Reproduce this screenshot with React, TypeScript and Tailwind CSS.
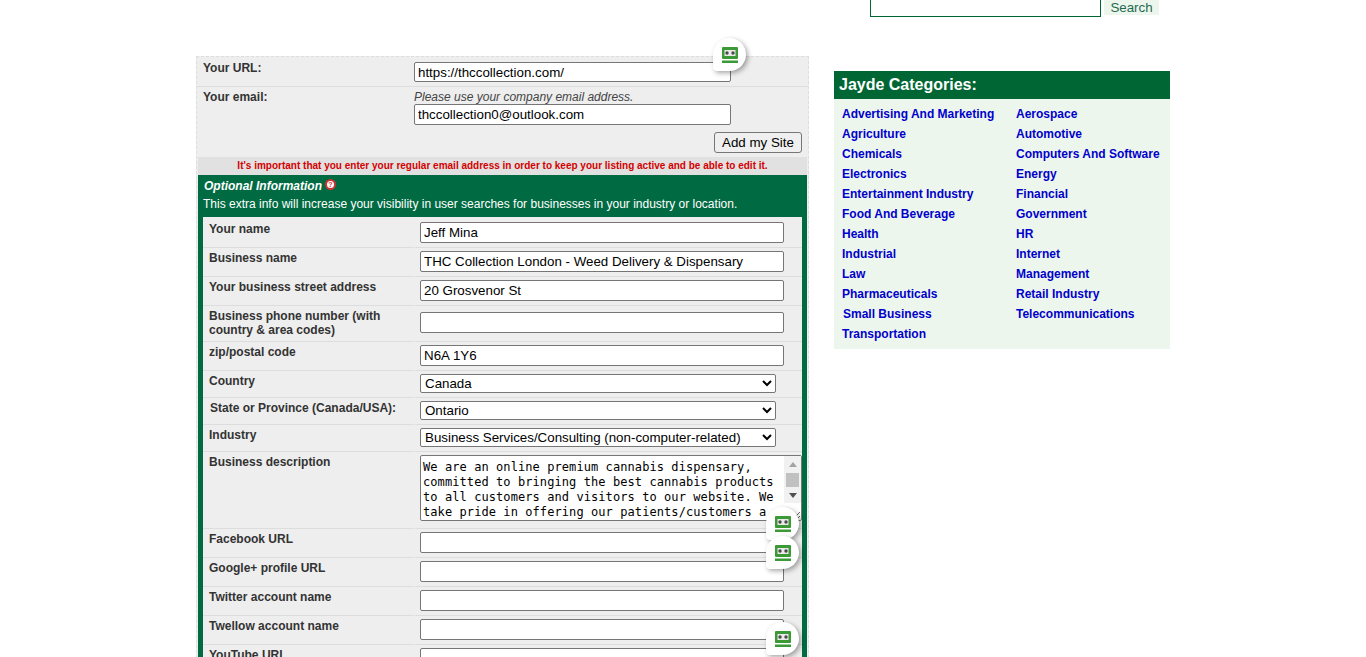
const inputCls =
  "block rounded-[2px] border border-[#767676] bg-white px-[3px] text-[13.33px] leading-[18px] text-black";
const selectCls =
  "block h-[19px] w-[356px] rounded-[2px] border border-[#767676] bg-white text-[13.33px] leading-[17px] text-black";

const categories = [
  ["Advertising And Marketing", "Aerospace"],
  ["Agriculture", "Automotive"],
  ["Chemicals", "Computers And Software"],
  ["Electronics", "Energy"],
  ["Entertainment Industry", "Financial"],
  ["Food And Beverage", "Government"],
  ["Health", "HR"],
  ["Industrial", "Internet"],
  ["Law", "Management"],
  ["Pharmaceuticals", "Retail Industry"],
  ["Small Business", "Telecommunications"],
  ["Transportation", ""],
];

function RoboBadge({ className }: { className: string }) {
  return (
    <div
      className={`absolute flex h-[33px] w-[33px] items-center justify-center rounded-[50%_50%_50%_4px] bg-white shadow-[2px_2px_5px_rgba(0,0,0,0.35)] ${className}`}
    >
      <svg width="16" height="16" viewBox="0 0 16 16">
        <rect x="0" y="0" width="16" height="12" rx="1" fill="#3b9a35" />
        <rect x="2.5" y="3" width="11" height="6" fill="#e9e9e9" />
        <circle cx="5" cy="6" r="1.7" fill="#4a4a4a" />
        <circle cx="11" cy="6" r="1.7" fill="#4a4a4a" />
        <rect x="0" y="13.5" width="16" height="2.5" fill="#3b9a35" />
      </svg>
    </div>
  );
}

function Row({
  label,
  h,
  children,
  labelCls = "pl-[6px]",
  pt = "pt-[3px]",
}: {
  label: string;
  h: string;
  children: React.ReactNode;
  labelCls?: string;
  pt?: string;
}) {
  return (
    <div className={`flex gap-[1px] ${h}`}>
      <div
        className={`w-[211px] shrink-0 border-b border-[#dddddd] ${pt} text-[12px] leading-[14px] font-bold text-[#333333] ${labelCls}`}
      >
        {label}
      </div>
      <div className={`flex-1 border-b border-[#dddddd] ${pt} pl-[5px]`}>
        {children}
      </div>
    </div>
  );
}

function TextRow({ label, value = "", h = "h-[29px]", pt }: { label: string; value?: string; h?: string; pt?: string }) {
  return (
    <Row label={label} h={h} pt={pt}>
      <input className={`${inputCls} h-[21px] w-[364px]`} defaultValue={value} />
    </Row>
  );
}

function SelectRow({ label, value, labelCls }: { label: string; value: string; labelCls?: string }) {
  return (
    <Row label={label} h="h-[27px]" labelCls={labelCls}>
      <select className={selectCls} defaultValue={value}>
        <option>{value}</option>
      </select>
    </Row>
  );
}

function DescriptionField() {
  return (
    <div className="relative w-[382px]">
      <textarea
        className="block h-[66px] w-[382px] resize overflow-hidden rounded-[2px] border border-[#767676] bg-white pt-[4px] pr-[18px] pl-[2px] font-['DejaVu_Sans_Mono',monospace] text-[12px] leading-[15px] tracking-[0.08px] text-black"
        defaultValue="We are an online premium cannabis dispensary, committed to bringing the best cannabis products to all customers and visitors to our website. We take pride in offering our patients/customers a wide range of high quality products and the best service in the whole of the country."
      />
      {/* native scrollbar does not paint in the headless page */}
      <div className="absolute top-[1px] right-[1px] flex h-[47px] w-[17px] flex-col items-center bg-[#f1f1f1]">
        <div className="mt-[6px] h-0 w-0 border-x-[4px] border-b-[5px] border-x-transparent border-b-[#a3a3a3]" />
        <div className="mt-[6px] h-[14px] w-[13px] bg-[#c1c1c1]" />
        <div className="mt-[6px] h-0 w-0 border-x-[4px] border-t-[5px] border-x-transparent border-t-[#505050]" />
      </div>
    </div>
  );
}

export default function App() {
  return (
    <div className="relative h-[657px] overflow-hidden bg-white font-['Liberation_Sans',Arial,sans-serif]">
      <header className="flex h-[56px] items-start pl-[870px]">
        <div className="h-[17px] w-[231px] border border-t-0 border-[#006633]" />
        <button className="ml-[3px] h-[15px] w-[55px] bg-[#edf6ed] text-[13.33px] leading-[14px] text-[#1d6a50]">
          Search
        </button>
      </header>

      <main className="flex items-start pl-[196px]">
        <section className="relative w-[613px] border border-dashed border-[#dddddd] bg-[#eeeeee]">
          <div className="flex h-[30px] border-b border-[#dddddd] pl-[6px]">
            <div className="w-[211px] pt-[4px] text-[12px] leading-[14px] font-bold text-[#333333]">Your URL:</div>
            <div className="pt-[5px]">
              <input className={`${inputCls} h-[20px] w-[317px]`} defaultValue="https://thccollection.com/" />
            </div>
          </div>
          <div className="flex h-[70px] pl-[6px]">
            <div className="w-[211px] pt-[3px] text-[12px] leading-[14px] font-bold text-[#333333]">Your email:</div>
            <div className="flex-1 pt-[3px]">
              <p className="text-[12px] leading-[14px] text-[#444444] italic">Please use your company email address.</p>
              <input className={`${inputCls} h-[21px] w-[317px]`} defaultValue="thccollection0@outlook.com" />
              <div className="mt-[7px] flex justify-end pr-[6px]">
                <button className="h-[21px] w-[88px] rounded-[3px] border border-[#767676] bg-[#efefef] text-[13.33px] leading-[19px] text-black">
                  Add my Site
                </button>
              </div>
            </div>
          </div>
          <p className="mx-[1px] h-[18px] bg-[#e1e1e1] text-center text-[10px] leading-[18px] font-bold text-[#d40000]">
            It's important that you enter your regular email address in order to keep your listing active and be able to edit it.
          </p>
          <div className="mx-[1px] bg-[#006a42] px-[5px] pb-[8px]">
            <div className="flex h-[21px] items-center gap-[3px] pt-[1px] pl-[1px] text-[12px] font-bold text-white italic">
              Optional Information
              <span className="mb-[3px] flex h-[11px] w-[11px] items-center justify-center rounded-full border-2 border-[#c33] bg-white text-[7px] leading-none font-bold text-[#c33] not-italic">
                ?
              </span>
            </div>
            <p className="h-[21px] pt-[1px] text-[12px] leading-[15px] text-white">
              This extra info will increase your visibility in user searches for businesses in your industry or location.
            </p>
            <div className="bg-[#eeeeee]">
              <TextRow label="Your name" value="Jeff Mina" h="h-[31px]" pt="pt-[5px]" />
              <TextRow label="Business name" value="THC Collection London - Weed Delivery & Dispensary" />
              <TextRow label="Your business street address" value="20 Grosvenor St" />
              <Row label="Business phone number (with country & area codes)" h="h-[36px]">
                <div className="pt-[3px]">
                  <input className={`${inputCls} h-[21px] w-[364px]`} />
                </div>
              </Row>
              <TextRow label="zip/postal code" value="N6A 1Y6" />
              <SelectRow label="Country" value="Canada" />
              <SelectRow label="State or Province (Canada/USA):" value="Ontario" labelCls="pl-[7px]" />
              <SelectRow label="Industry" value="Business Services/Consulting (non-computer-related)" />
              <Row label="Business description" h="h-[77px]">
                <DescriptionField />
              </Row>
              <TextRow label="Facebook URL" />
              <TextRow label="Google+ profile URL" />
              <TextRow label="Twitter account name" />
              <TextRow label="Twellow account name" />
              <TextRow label="YouTube URL" />
            </div>
          </div>
          <RoboBadge className="top-[-19px] left-[516px]" />
          <RoboBadge className="top-[450px] left-[569px]" />
          <RoboBadge className="top-[479px] left-[569px]" />
          <RoboBadge className="top-[565px] left-[569px]" />
        </section>

        <aside className="mt-[15px] ml-[25px] w-[336px]">
          <h2 className="h-[28px] bg-[#006633] pl-[5px] text-[16px] leading-[28px] font-bold text-white">
            Jayde Categories:
          </h2>
          <div className="h-[250px] bg-[#edf6ed] pt-[5px] pl-[8px]">
            {categories.map(([a, b]) => (
              <div key={a} className="grid h-[20px] grid-cols-[174px_1fr] text-[12px] leading-[20px] font-bold text-[#0000cc]">
                <a className={a === "Small Business" ? "pl-[1px]" : ""}>{a}</a>
                <a>{b}</a>
              </div>
            ))}
          </div>
        </aside>
      </main>
    </div>
  );
}
